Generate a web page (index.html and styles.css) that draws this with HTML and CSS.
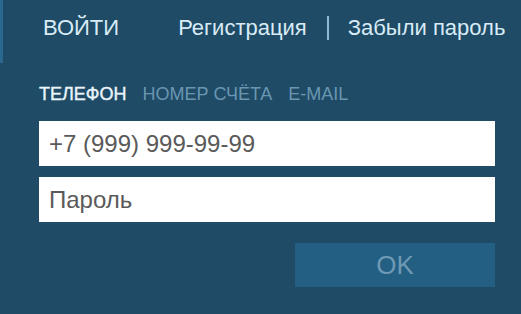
FILE: index.html
```html
<!DOCTYPE html>
<html lang="ru">
<head>
<meta charset="UTF-8">
<title>Вход</title>
<link rel="stylesheet" href="styles.css">
</head>
<body>
<div class="panel">
  <div class="top">
    <a class="top-link active">ВОЙТИ</a>
    <a class="top-link">Регистрация</a>
    <span class="sep"></span>
    <a class="top-link">Забыли пароль</a>
  </div>
  <form class="login">
    <div class="tabs">
      <span class="tab current">ТЕЛЕФОН</span>
      <span class="tab">НОМЕР СЧЁТА</span>
      <span class="tab">E-MAIL</span>
    </div>
    <input class="field" type="text" placeholder="+7 (999) 999-99-99">
    <input class="field" type="password" placeholder="Пароль">
    <div class="actions">
      <button class="ok" type="button">OK</button>
    </div>
  </form>
</div>
</body>
</html>
```

FILE: styles.css
```css
html, body {
  margin: 0;
  background: #1f4b66;
  font-family: "Liberation Sans", Arial, sans-serif;
}
.panel {
  width: 521px;
  height: 314px;
}
.top {
  display: flex;
  align-items: center;
  height: 63px;
  padding-bottom: 7px;
  box-sizing: border-box;
}
.top-link {
  font-size: 22px;
  color: #d9ebf6;
  cursor: pointer;
}
.top-link.active {
  align-self: stretch;
  display: flex;
  align-items: center;
  padding-left: 40px;
  margin-right: 59px;
  border-left: 3px solid #2a6890;
  margin-bottom: -7px;
  padding-bottom: 7px;
}
.sep {
  width: 2px;
  height: 24px;
  background: #8fbad6;
  margin: 0 19px 0 20px;
}
.login {
  padding: 21px 26px 0 39px;
}
.tabs {
  display: flex;
  gap: 16px;
  margin-bottom: 16px;
}
.tab {
  font-size: 18px;
  color: #6a96b2;
}
.tab.current {
  color: #eaf5fb;
  -webkit-text-stroke: 0.4px #eaf5fb;
}
.field {
  display: block;
  width: 456px;
  height: 45px;
  box-sizing: border-box;
  border: 0;
  padding: 0 10px;
  margin-bottom: 11px;
  font-family: inherit;
  font-size: 24px;
  color: #555;
  background: #fff;
  outline: none;
}
.field::placeholder {
  color: #5a5a5a;
}
.actions {
  display: flex;
  justify-content: flex-end;
  width: 456px;
  padding-top: 10px;
}
.ok {
  width: 200px;
  height: 44px;
  border: 0;
  background: #235f82;
  color: #6f99b4;
  font-family: inherit;
  font-size: 26px;
  padding: 0;
}
```
